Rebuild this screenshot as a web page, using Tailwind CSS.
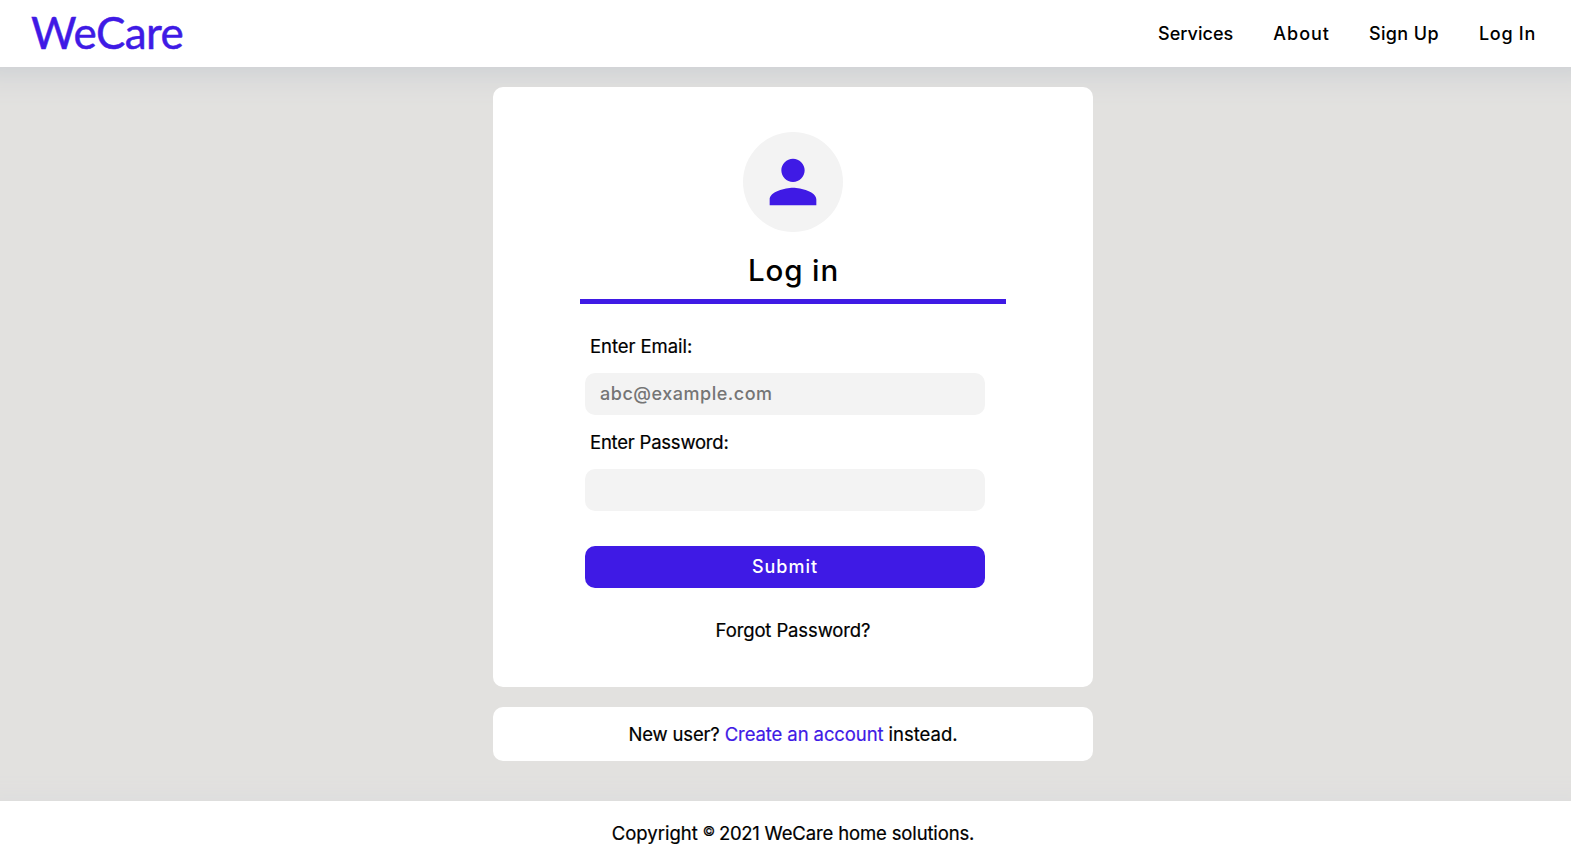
<!DOCTYPE html>
<html lang="en">
<head>
<meta charset="utf-8">
<title>WeCare - Log in</title>
<script src="https://cdn.jsdelivr.net/npm/@tailwindcss/browser@4"></script>
</head>
<body class="flex h-screen flex-col overflow-hidden bg-[#e2e1df] font-['Inter','Liberation_Sans',sans-serif] text-[18.5px] leading-6 text-black">
  <header class="flex h-[67px] shrink-0 items-center justify-between bg-white pr-[36px] pl-[31px] shadow-[0_-25px_30px_30px_#c9cdd2]">
    <a class="pb-[4px] font-['Lato'] text-[44px] leading-[62px] tracking-[-0.6px] text-[#3f1ae5] [-webkit-text-stroke:0.5px_#3f1ae5]">WeCare</a>
    <nav class="flex gap-10 text-lg font-medium">
      <a class="tracking-[0.03px]">Services</a>
      <a class="mr-[-1px] tracking-[0.98px]">About</a>
      <a class="tracking-[0.37px]">Sign Up</a>
      <a class="mr-[-1px] tracking-[0.72px]">Log In</a>
    </nav>
  </header>

  <main class="flex flex-1 flex-col items-center gap-5 pt-5 pl-[15px]">
    <section class="flex h-[600px] w-[600px] shrink-0 flex-col items-center rounded-[10px] bg-white pt-[45px]">
      <div class="flex size-[100px] items-center justify-center rounded-full bg-[#f3f3f3]">
        <svg class="size-[70px]" viewBox="0 0 24 24" fill="#3f1ae5"><path d="M12 12c2.21 0 4-1.79 4-4s-1.79-4-4-4-4 1.790-4 4 1.790 4 4 4zm0 2c-2.670 0-8 1.340-8 4v2h16v-2c0-2.660-5.330-4-8-4z"/></svg>
      </div>
      <h1 class="mt-[18px] h-[54px] w-[426px] border-b-5 border-[#3f1ae5] pl-[1px] text-center text-[29.5px] leading-[40px] font-medium tracking-[0.9px]">Log in</h1>
      <form class="flex w-[426px] flex-col pt-[30px] pl-[5px]">
        <label class="pl-[5px] tracking-[-0.06px] [-webkit-text-stroke:0.2px_#000]">Enter Email:</label>
        <input type="email" placeholder="abc@example.com" class="mt-[15px] h-[42px] w-[400px] rounded-[10px] bg-[#f3f3f3] px-[15px] pb-[2px] text-lg font-medium tracking-[0.52px] placeholder:text-[#757575]">
        <label class="mt-[15px] pl-[5px] tracking-[-0.22px] [-webkit-text-stroke:0.2px_#000]">Enter Password:</label>
        <input type="password" class="mt-[15px] h-[42px] w-[400px] rounded-[10px] bg-[#f3f3f3] px-[15px]">
        <button type="button" class="mt-[35px] h-[42px] w-[400px] rounded-[10px] bg-[#3f1ae5] text-lg font-medium tracking-[1px] text-white">Submit</button>
      </form>
      <a class="mt-[30px] tracking-[-0.12px] [-webkit-text-stroke:0.2px_#000]">Forgot Password?</a>
    </section>

    <section class="flex h-[54px] w-[600px] shrink-0 items-center justify-center rounded-[10px] bg-white">
      <p class="tracking-[-0.16px] [-webkit-text-stroke:0.2px_currentColor]">New user? <a class="tracking-[-0.1px] text-[#3f1ae5]">Create an account</a> <span class="tracking-[0px]">instead.</span></p>
    </section>
  </main>

  <footer class="flex h-16 shrink-0 items-center justify-center bg-white pl-[15px] shadow-[0_35px_30px_30px_#d8d9dc]">
    <p class="tracking-[-0.14px] [-webkit-text-stroke:0.2px_#000]"><span class="tracking-[0px]">Copyright</span> <span class="inline-block w-[11px] align-[4px] text-[13.5px] leading-none">©</span> <span class="tracking-[-0.3px]">2021</span> WeCare home solutions.</p>
  </footer>
</body>
</html>
